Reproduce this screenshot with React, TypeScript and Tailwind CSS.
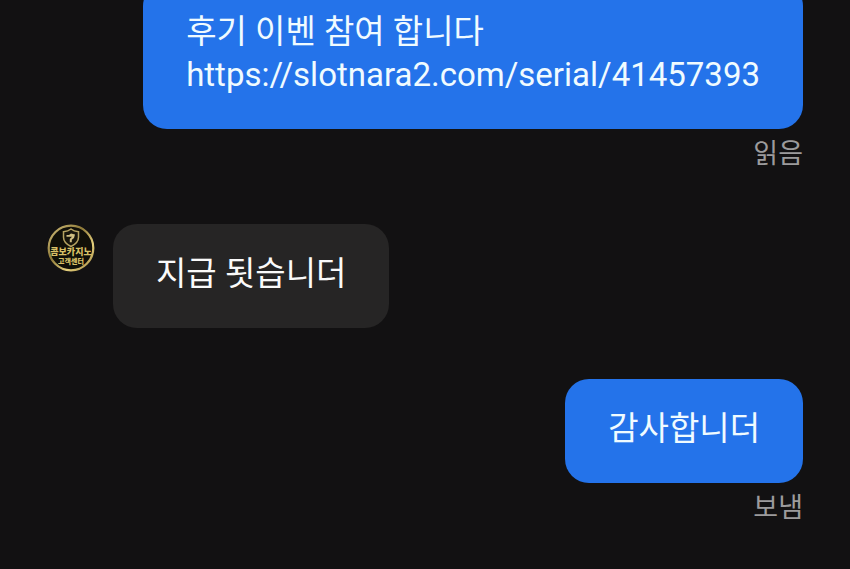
import type { ReactNode } from 'react';

function Bubble({ sent = false, children }: { sent?: boolean; children: ReactNode }) {
  return (
    <div
      className={`rounded-3xl px-[43px] pt-[28px] pb-[33px] text-[33px] leading-[43px] ${
        sent ? 'bg-[#2473ea] text-[#f0fbff]' : 'bg-[#262525] text-[#fafafa]'
      }`}
    >
      {children}
    </div>
  );
}

function SentMessage({ status, children }: { status: string; children: ReactNode }) {
  return (
    <article className="flex flex-col items-end">
      <Bubble sent>{children}</Bubble>
      <p className="text-[27px] leading-[50px] text-[#9c9b9c]">{status}</p>
    </article>
  );
}

function Avatar() {
  return (
    <svg
      className="size-12 shrink-0"
      viewBox="0 0 48 48"
      role="img"
      aria-label="콤보카지노 고객센터"
    >
      <defs>
        <linearGradient id="gold" x1="0" y1="0" x2="1" y2="1">
          <stop offset="0" stopColor="#d2bf7c" />
          <stop offset="0.4" stopColor="#8f7a38" />
          <stop offset="0.7" stopColor="#e6d17e" />
          <stop offset="1" stopColor="#99803a" />
        </linearGradient>
      </defs>
      <circle cx="24" cy="24" r="22.3" fill="#100f08" stroke="url(#gold)" strokeWidth="2.200" />
      <path
        d="M24 5c-2 1.700-4.500 2.500-7.500 2.700v5.500c0 4.300 2.800 7 7.500 9.300 4.700-2.300 7.500-5 7.500-9.300V7.700C28.500 7.500 26 6.700 24 5Z"
        fill="#17150c"
        stroke="#b5a261"
        strokeWidth="1.500"
      />
      <path
        d="M19.500 11H22l2-1.500 4 1-1 3.500-2.200 1.700v2.600h-2v-3.200L25 12.800h-5.500Z"
        fill="#d0bf83"
      />
      <g
        fill="#d8c066"
        textAnchor="middle"
        fontWeight="900"
        fontFamily="'Noto Sans CJK KR', sans-serif"
      >
        <text x="24" y="31" fontSize="9">
          콤보카지노
        </text>
        <text x="24" y="40" fontSize="7">
          고객센터
        </text>
      </g>
    </svg>
  );
}

export default function App() {
  return (
    <div className="h-screen overflow-hidden bg-[#121112] font-[Roboto,'Noto_Sans_CJK_KR',sans-serif]">
      <main className="-mt-[18px] flex flex-col px-[47px]">
        <SentMessage status="읽음">
          <p>후기 이벤 참여 합니다</p>
          <a href="https://slotnara2.com/serial/41457393">https://slotnara2.com/serial/41457393</a>
        </SentMessage>
        <article className="mt-[45px] mb-[51px] flex items-start gap-[18px]">
          <Avatar />
          <Bubble>지급 됫습니더</Bubble>
        </article>
        <SentMessage status="보냄">감사합니더</SentMessage>
      </main>
    </div>
  );
}
